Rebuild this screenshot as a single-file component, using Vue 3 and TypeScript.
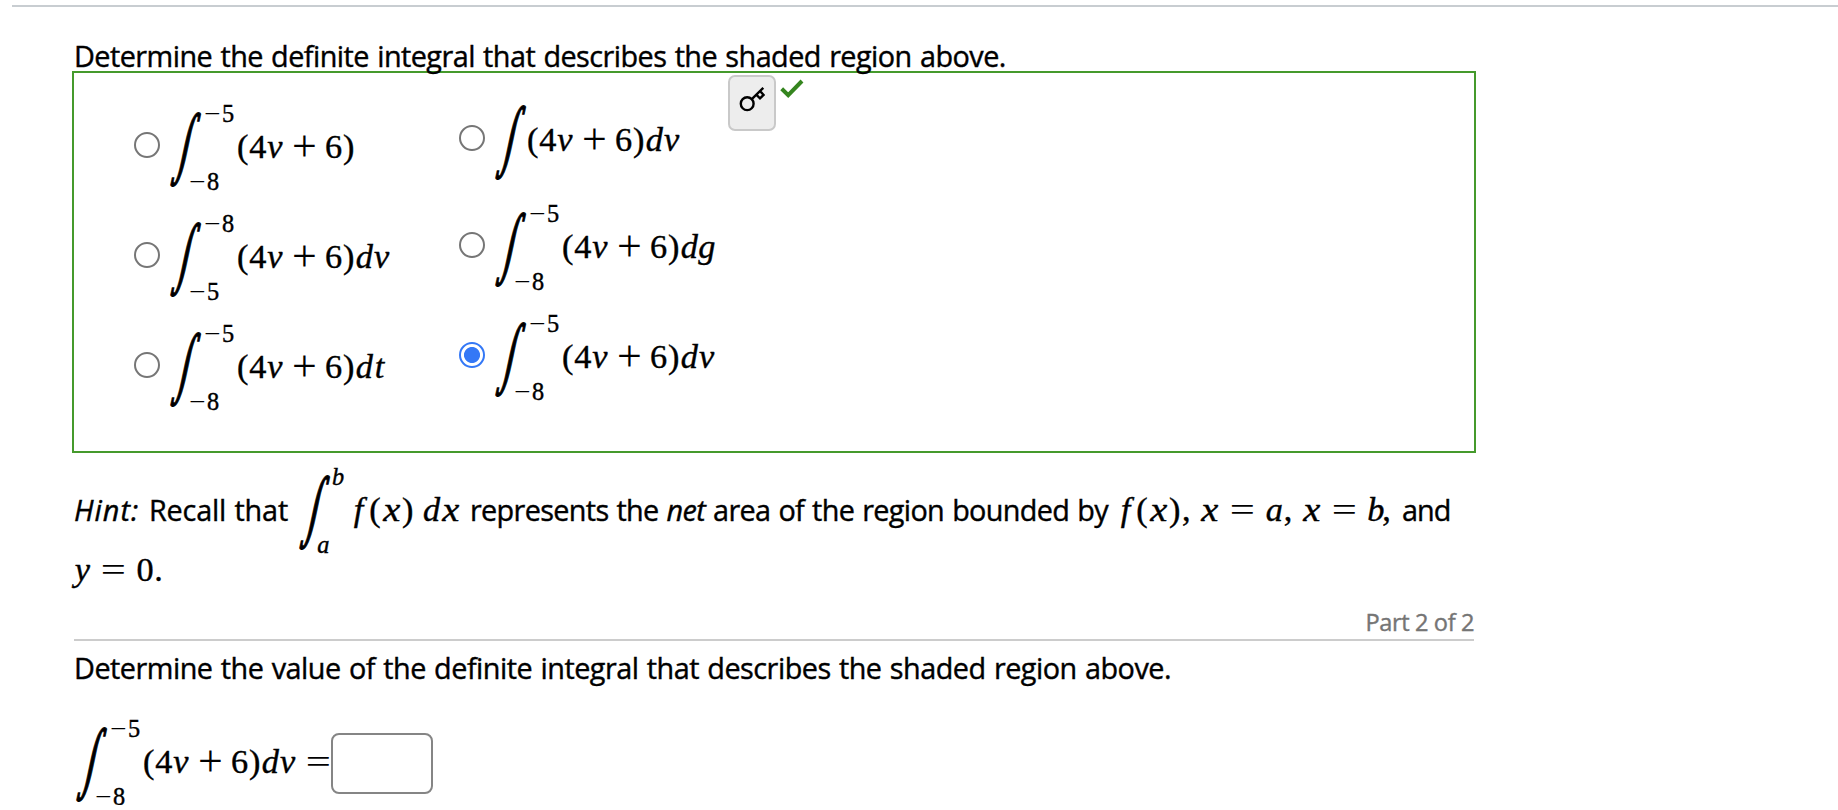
<template>
  <div class="page">
    <main class="question">
      <p class="prompt">Determine the definite integral that describes the shaded region above.</p>

      <section class="answer">
        <div class="choices">
          <div v-for="(column, c) in columns" :key="c" class="column" :class="'column-' + (c + 1)">
            <label v-for="choice in column" :key="choice.id" class="choice">
              <input v-model="selected" type="radio" name="integral" :value="choice.id" />
              <span class="math">
                <span class="integral">
                  <svg class="sign" width="33" height="76" viewBox="0 0 33 76">
                    <text transform="translate(3.6 56.5) skewX(-5) scale(0.5 0.98)">∫</text>
                  </svg>
                  <span v-if="choice.upper" class="limits">
                    <span class="upper"><span v-for="(t, i) in tokens(choice.upper)" :key="i" :class="t.cls">{{ t.ch }}</span></span>
                    <span class="lower"><span v-for="(t, i) in tokens(choice.lower)" :key="i" :class="t.cls">{{ t.ch }}</span></span>
                  </span>
                </span>
                <span v-for="(t, i) in tokens(choice.body)" :key="i" :class="t.cls">{{ t.ch }}</span>
              </span>
            </label>
          </div>
        </div>
        <button class="key" type="button" aria-label="Show answer key">
          <svg width="26" height="26" viewBox="0 0 26 26">
            <circle cx="8.2" cy="17.7" r="6.4" />
            <path d="M12.8 13.2 L24.3 1.8 M17.5 8.9 L21 12.3 L24.6 8.9 L21.2 5.3" />
          </svg>
        </button>
        <svg class="check" width="24" height="20" viewBox="0 0 24 20">
          <path d="M1.7 9.8 L8.2 16.2 L22 2" />
        </svg>
      </section>

      <div class="hint">
        <div class="hint-line">
          <em class="hint-label">Hint:</em>
          <span class="recall">Recall that</span>
          <span class="math hint-integral">
            <span class="integral">
              <svg class="sign" width="33" height="76" viewBox="0 0 33 76">
                <text transform="translate(3.6 56.5) skewX(-5) scale(0.5 0.98)">∫</text>
              </svg>
              <span class="limits">
                <span class="upper"><span class="b">b</span></span>
                <span class="lower"><span class="a">a</span></span>
              </span>
            </span>
            <span v-for="(t, i) in tokens('f(x) dx')" :key="i" :class="t.cls">{{ t.ch }}</span>
          </span>
          <span class="represents">represents the <em>net</em> area of the region bounded by</span>
          <span class="math conditions">
            <span v-for="(t, i) in tokens('f(x),~x=a,~x=b,')" :key="i" :class="t.cls">{{ t.ch }}</span>
          </span>
          <span class="and">and</span>
        </div>
        <div class="math hint-end">
          <span v-for="(t, i) in tokens('y=0.')" :key="i" :class="t.cls">{{ t.ch }}</span>
        </div>
      </div>

      <header class="part">Part 2 of 2</header>
      <p class="prompt second">Determine the value of the definite integral that describes the shaded region above.</p>

      <div class="final">
        <span class="math">
          <span class="integral">
            <svg class="sign" width="33" height="76" viewBox="0 0 33 76">
              <text transform="translate(3.6 56.5) skewX(-5) scale(0.5 0.98)">∫</text>
            </svg>
            <span class="limits">
              <span class="upper"><span v-for="(t, i) in tokens('−5')" :key="i" :class="t.cls">{{ t.ch }}</span></span>
              <span class="lower"><span v-for="(t, i) in tokens('−8')" :key="i" :class="t.cls">{{ t.ch }}</span></span>
            </span>
          </span>
          <span v-for="(t, i) in tokens('(4v+6)dv=')" :key="i" :class="t.cls">{{ t.ch }}</span>
        </span>
        <input v-model="value" class="value" type="text" aria-label="Value of the integral" />
      </div>
    </main>
  </div>
</template>

<script setup lang="ts">
import { ref } from 'vue'

interface Choice {
  id: string
  upper: string
  lower: string
  body: string
}

const selected = ref('f')
const value = ref('')

const columns: Choice[][] = [
  [
    { id: 'a', upper: '−5', lower: '−8', body: '(4v+6)' },
    { id: 'b', upper: '−8', lower: '−5', body: '(4v+6)dv' },
    { id: 'c', upper: '−5', lower: '−8', body: '(4v+6)dt' },
  ],
  [
    { id: 'd', upper: '', lower: '', body: '(4v+6)dv' },
    { id: 'e', upper: '−5', lower: '−8', body: '(4v+6)dg' },
    { id: 'f', upper: '−5', lower: '−8', body: '(4v+6)dv' },
  ],
]

const symbols: Record<string, string> = {
  '(': 'paren',
  ')': 'paren',
  '+': 'plus',
  '=': 'equals',
  '−': 'minus',
  ',': 'mark',
  '.': 'mark',
  ' ': 'thin',
  '~': 'space',
}

// one token per character, each with its own advance width
const tokens = (expr: string) =>
  [...expr].map((ch) => ({
    ch: ch === '~' || ch === ' ' ? '' : ch,
    cls: symbols[ch] ?? (/\d/.test(ch) ? 'digit' : `var ${ch}`),
  }))
</script>

<style>
body {
  margin: 0;
  background: #fff;
}
</style>

<style scoped>
.page {
  box-sizing: border-box;
  height: 805px;
  margin-left: 12px;
  padding: 34px 0 0 60px;
  overflow: hidden;
  border-top: 2px solid #c8cdd1;
  color: #000;
  font-family: "Open Sans", sans-serif;
  font-size: 28.8px;
  position: relative;
  top: 5px;
  -webkit-text-stroke: 0.4px currentColor;
}
.question {
  width: 1404px;
}
.prompt {
  position: relative;
  z-index: 1;
  margin: 0 0 0 2px;
  line-height: 30px;
  letter-spacing: -0.54px;
  word-spacing: 1.3px;
  white-space: nowrap;
}
.answer {
  box-sizing: border-box;
  display: flex;
  align-items: flex-start;
  height: 382px;
  border: 2px solid #459a2c;
}
.choices {
  display: flex;
  width: 654px;
}
.column {
  display: flex;
  flex-direction: column;
  gap: 34px;
}
.column-1 {
  box-sizing: border-box;
  width: 385px;
  padding: 38px 0 0 60px;
}
.column-2 {
  padding-top: 31px;
}
.column-2 .choice:first-child {
  margin-bottom: -3px;
}
.choice {
  display: flex;
  align-items: center;
  gap: 8px;
  height: 76px;
}
.choice input {
  appearance: none;
  box-sizing: border-box;
  flex: none;
  width: 26px;
  height: 26px;
  margin: 0 0 8px;
  border: 2px solid #767676;
  border-radius: 50%;
  background: #fff;
}
.choice input:checked {
  border-color: #3478f6;
  background: radial-gradient(circle, #3478f6 7.6px, #fff 8.4px);
}

.math {
  display: inline-block;
  font-family: "Liberation Serif", serif;
  font-size: 34.3px;
  line-height: 1;
  letter-spacing: 0;
  white-space: nowrap;
  -webkit-text-stroke: 0.4px #000;
}
.math > span,
.limits > span > span {
  display: inline-block;
  text-align: center;
}
.math > .integral {
  contain: layout;
  display: inline-flex;
  height: 76px;
  vertical-align: -29px;
}
.sign {
  flex: none;
  overflow: visible;
}
.sign text {
  font: italic 68.5px "DejaVu Math TeX Gyre", "DejaVu Serif", serif;
  stroke: #000;
  stroke-width: 1.3px;
  -webkit-text-stroke: 1.3px #000;
}
.limits {
  display: flex;
  flex-direction: column;
  justify-content: space-between;
  width: 35px;
  font-size: 24.3px;
  line-height: 24px;
  text-align: left;
}
.upper {
  margin: -9px 0 0 2px;
}
.lower {
  margin: 0 0 -7px -13px;
}
.paren {
  width: 0.389em;
}
.digit {
  width: 0.5em;
}
.minus,
.plus,
.equals {
  width: 0.778em;
  -webkit-text-stroke: 0;
}
.minus {
  transform: scaleX(1.2);
}
.plus {
  margin: 0 0.222em;
  transform: scale(1.28);
}
.equals {
  margin: 0 0.278em;
  transform: scaleX(1.3);
}
.equals:last-child {
  margin-right: -1px;
}
.mark {
  width: 0.278em;
}
.thin {
  width: 0.24em;
}
.space {
  width: 0.26em;
}
.var,
.a,
.b {
  font-style: italic;
}
.v { width: 0.485em; }
.d { width: 0.52em; }
.t { width: 0.361em; }
.g { width: 0.477em; }
.x { width: 0.572em; transform: scaleX(1.12); }
.y { width: 0.49em; }
.a { width: 0.529em; }
.b { width: 0.429em; }
.f { width: 0.56em; }

.key {
  box-sizing: border-box;
  flex: none;
  width: 48px;
  height: 56px;
  margin-top: 2px;
  padding: 0 0 9px;
  border: 2px solid #c9c9c9;
  border-radius: 7px;
  background: #ededed;
}
.key svg {
  display: block;
  margin: 0 auto;
  fill: none;
  stroke: #000;
  stroke-width: 2.4;
}
.check {
  margin: 6px 0 0 4px;
  fill: none;
  stroke: #35851f;
  stroke-width: 4;
}

.hint {
  padding-top: 19px;
}
.hint-line {
  display: flex;
  align-items: baseline;
  line-height: 76px;
  white-space: nowrap;
  word-spacing: 1.2px;
}
.hint-line > * {
  flex: none;
}
.hint-label {
  width: 75px;
  padding-left: 2px;
  letter-spacing: 1px;
}
.recall {
  width: 148px;
  letter-spacing: -0.2px;
}
.hint-integral {
  width: 173px;
}
.hint-integral .limits {
  width: 19px;
}
.represents {
  width: 646px;
  letter-spacing: -0.66px;
}
.conditions {
  width: 286px;
}
.and {
  letter-spacing: -1px;
}
.hint-end {
  display: block;
  height: 35px;
  padding: 2px 0 0 2px;
}
.part {
  width: 1400px;
  height: 38px;
  margin: 14px 0 0 2px;
  border-bottom: 2px solid #ccc;
  color: #757575;
  font-size: 23.6px;
  line-height: 42px;
  letter-spacing: -0.4px;
  text-align: right;
}
.second {
  margin-top: 12px;
  letter-spacing: -0.5px;
}
.final {
  display: flex;
  align-items: center;
  height: 76px;
  margin: 43px 0 0 2px;
}
.value {
  box-sizing: border-box;
  width: 102px;
  height: 61px;
  margin: 0 0 2px;
  border: 2px solid #858585;
  border-radius: 8px;
  background: #fff;
  font-size: 28px;
}
</style>
